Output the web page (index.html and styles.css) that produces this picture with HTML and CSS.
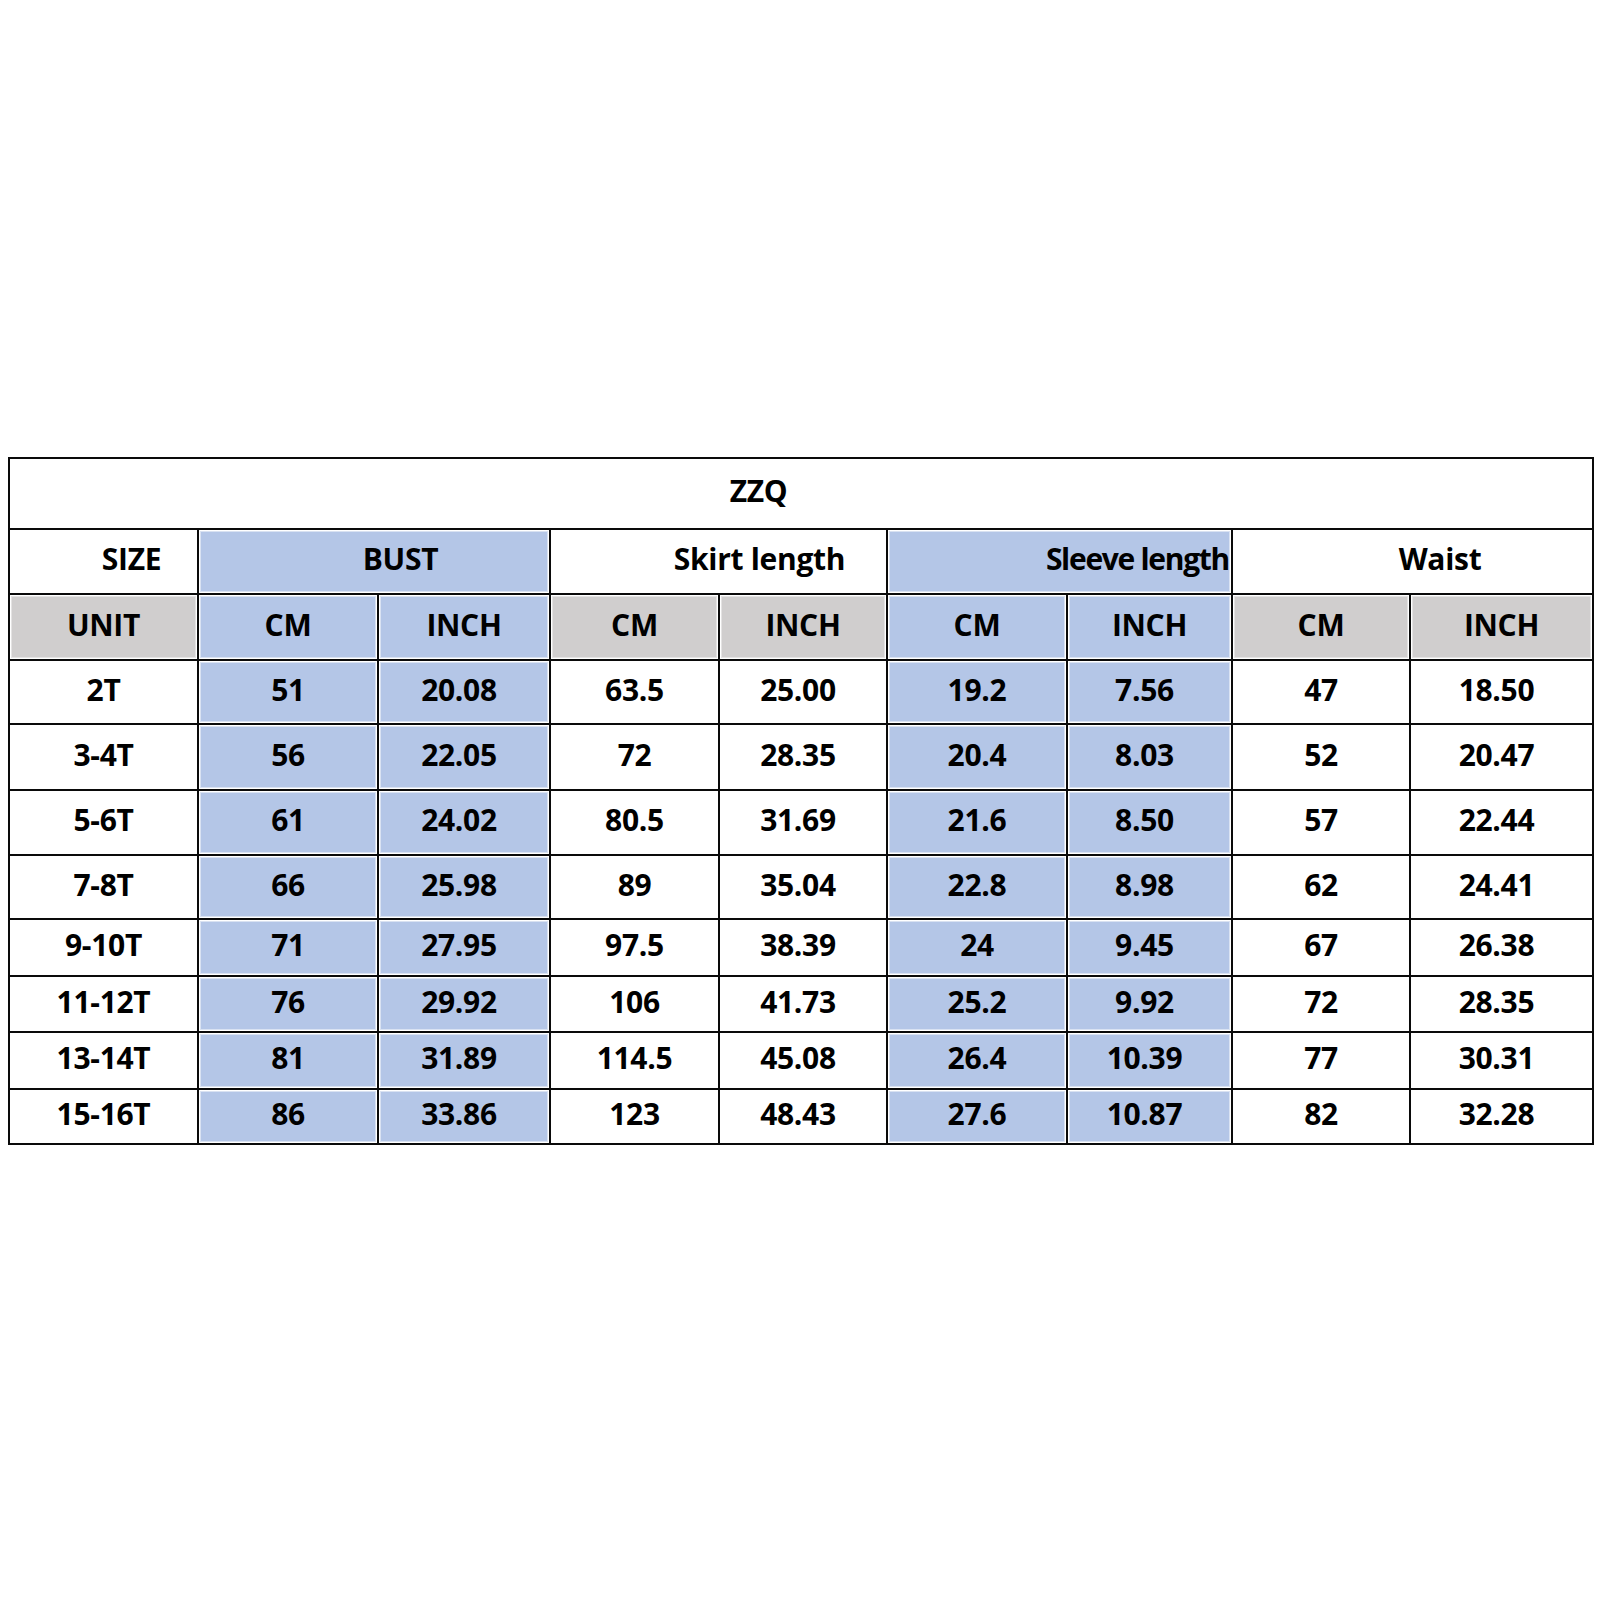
FILE: index.html
```html
<!DOCTYPE html>
<html>
<head>
<meta charset="utf-8">
<link rel="stylesheet" href="styles.css">
</head>
<body>
<div class="sheet">
  <div class="c title">ZZQ</div>

  <div class="c h-size">SIZE</div>
  <div class="c span2 blue h-bust">BUST</div>
  <div class="c span2 h-skirt">Skirt length</div>
  <div class="c span2 blue h-sleeve">Sleeve length</div>
  <div class="c span2 h-waist">Waist</div>

  <div class="c gray">UNIT</div>
  <div class="c blue">CM</div>
  <div class="c blue">INCH</div>
  <div class="c gray">CM</div>
  <div class="c gray">INCH</div>
  <div class="c blue">CM</div>
  <div class="c blue">INCH</div>
  <div class="c gray">CM</div>
  <div class="c gray">INCH</div>

  <div class="c">2T</div><div class="c blue">51</div><div class="c blue in">20.08</div><div class="c">63.5</div><div class="c in">25.00</div><div class="c blue">19.2</div><div class="c blue in">7.56</div><div class="c">47</div><div class="c in">18.50</div>
  <div class="c">3-4T</div><div class="c blue">56</div><div class="c blue in">22.05</div><div class="c">72</div><div class="c in">28.35</div><div class="c blue">20.4</div><div class="c blue in">8.03</div><div class="c">52</div><div class="c in">20.47</div>
  <div class="c">5-6T</div><div class="c blue">61</div><div class="c blue in">24.02</div><div class="c">80.5</div><div class="c in">31.69</div><div class="c blue">21.6</div><div class="c blue in">8.50</div><div class="c">57</div><div class="c in">22.44</div>
  <div class="c">7-8T</div><div class="c blue">66</div><div class="c blue in">25.98</div><div class="c">89</div><div class="c in">35.04</div><div class="c blue">22.8</div><div class="c blue in">8.98</div><div class="c">62</div><div class="c in">24.41</div>
  <div class="c">9-10T</div><div class="c blue">71</div><div class="c blue in">27.95</div><div class="c">97.5</div><div class="c in">38.39</div><div class="c blue">24</div><div class="c blue in">9.45</div><div class="c">67</div><div class="c in">26.38</div>
  <div class="c">11-12T</div><div class="c blue">76</div><div class="c blue in">29.92</div><div class="c">106</div><div class="c in">41.73</div><div class="c blue">25.2</div><div class="c blue in">9.92</div><div class="c">72</div><div class="c in">28.35</div>
  <div class="c">13-14T</div><div class="c blue">81</div><div class="c blue in">31.89</div><div class="c">114.5</div><div class="c in">45.08</div><div class="c blue">26.4</div><div class="c blue in">10.39</div><div class="c">77</div><div class="c in">30.31</div>
  <div class="c">15-16T</div><div class="c blue">86</div><div class="c blue in">33.86</div><div class="c">123</div><div class="c in">48.43</div><div class="c blue">27.6</div><div class="c blue in">10.87</div><div class="c">82</div><div class="c in">32.28</div>
</div>
</body>
</html>
```

FILE: styles.css
```css
html, body {
  margin: 0;
  padding: 0;
  background: #ffffff;
}

body {
  padding: 457px 6px 0 8px;
  font-family: "Open Sans", "Liberation Sans", sans-serif;
}

.sheet {
  display: grid;
  width: 1586px;
  box-sizing: border-box;
  grid-template-columns: 187px 178px 170px 167px 166px 178px 163px 176px 181px;
  grid-template-rows: 69px 63px 64px 62px 64px 63px 62px 55px 54px 55px 53px;
  gap: 2px;
  padding: 2px;
  background: #0a0a0a;
}

.c {
  background: #ffffff;
  color: #000000;
  font-weight: 700;
  font-size: 30px;
  letter-spacing: -0.3px;
  display: flex;
  align-items: center;
  justify-content: center;
  white-space: nowrap;
  overflow: hidden;
  box-sizing: border-box;
  padding-bottom: 6px;
}

.in {
  padding-right: 10px;
}

.title {
  grid-column: 1 / -1;
  padding-right: 85px;
}

.span2 {
  grid-column: span 2;
}

.blue {
  background: #b4c6e7;
  box-shadow: inset 0 0 0 1px #ffffff, inset 0 0 0 2px #d9e2f2;
}

.gray {
  background: #d0cece;
  box-shadow: inset 0 0 0 1px #ffffff, inset 0 0 0 2px #e4e3e3;
}

.h-size {
  padding-left: 56px;
}

.h-bust {
  padding-left: 53px;
}

.h-skirt {
  padding-left: 82px;
}

.h-sleeve {
  justify-content: flex-end;
  padding-right: 2px;
  letter-spacing: -1.3px;
}

.h-waist {
  padding-left: 55px;
}
```
